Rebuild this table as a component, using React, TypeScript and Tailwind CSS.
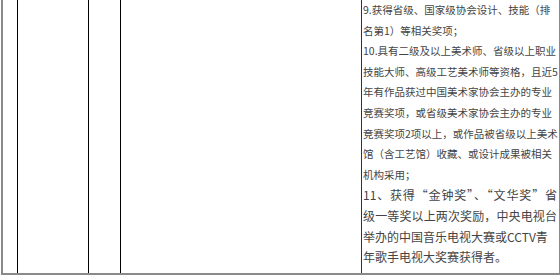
const part1 = [
  '9.获得省级、国家级协会设计、技能（排',
  '名第1）等相关奖项；',
  '10.具有二级及以上美术师、省级以上职业',
  '技能大师、高级工艺美术师等资格，且近5',
  '年有作品获过中国美术家协会主办的专业',
  '竞赛奖项，或省级美术家协会主办的专业',
  '竞赛奖项2项以上，或作品被省级以上美术',
  '馆（含工艺馆）收藏、或设计成果被相关',
  '机构采用；',
]

const part2 = [
  '11、获得“金钟奖”、“文华奖”省',
  '级一等奖以上两次奖励，中央电视台',
  '举办的中国音乐电视大赛或CCTV青',
  '年歌手电视大奖赛获得者。',
]

export default function App() {
  return (
    <div className="w-[560px] h-[277px] bg-white overflow-hidden">
      <div className="ml-[1px] flex h-[275px] w-[559px] border-l-2 border-b-2 border-r border-[#8a8a8a]">
        <div className="w-[15px] shrink-0 border-r border-black" />
        <div className="w-[71px] shrink-0 border-r border-black" />
        <div className="w-[32px] shrink-0 border-r border-black" />
        <div className="w-[241px] shrink-0 border-r border-[#333]" />
        <div
          className="w-[197px] shrink-0 pl-[1px] text-[#444] leading-[20.6px] whitespace-nowrap"
          style={{ fontFamily: '"Noto Sans CJK SC", "Noto Sans", sans-serif' }}
        >
          <div className="text-[10.5px]">
            {part1.map((line) => (
              <div key={line}>{line}</div>
            ))}
          </div>
          <div className="text-[12px] pr-[2px]">
            {part2.map((line, i) => (
              <div key={line} className={i < 2 ? '[text-align-last:justify]' : ''}>
                {line}
              </div>
            ))}
          </div>
        </div>
      </div>
    </div>
  )
}
